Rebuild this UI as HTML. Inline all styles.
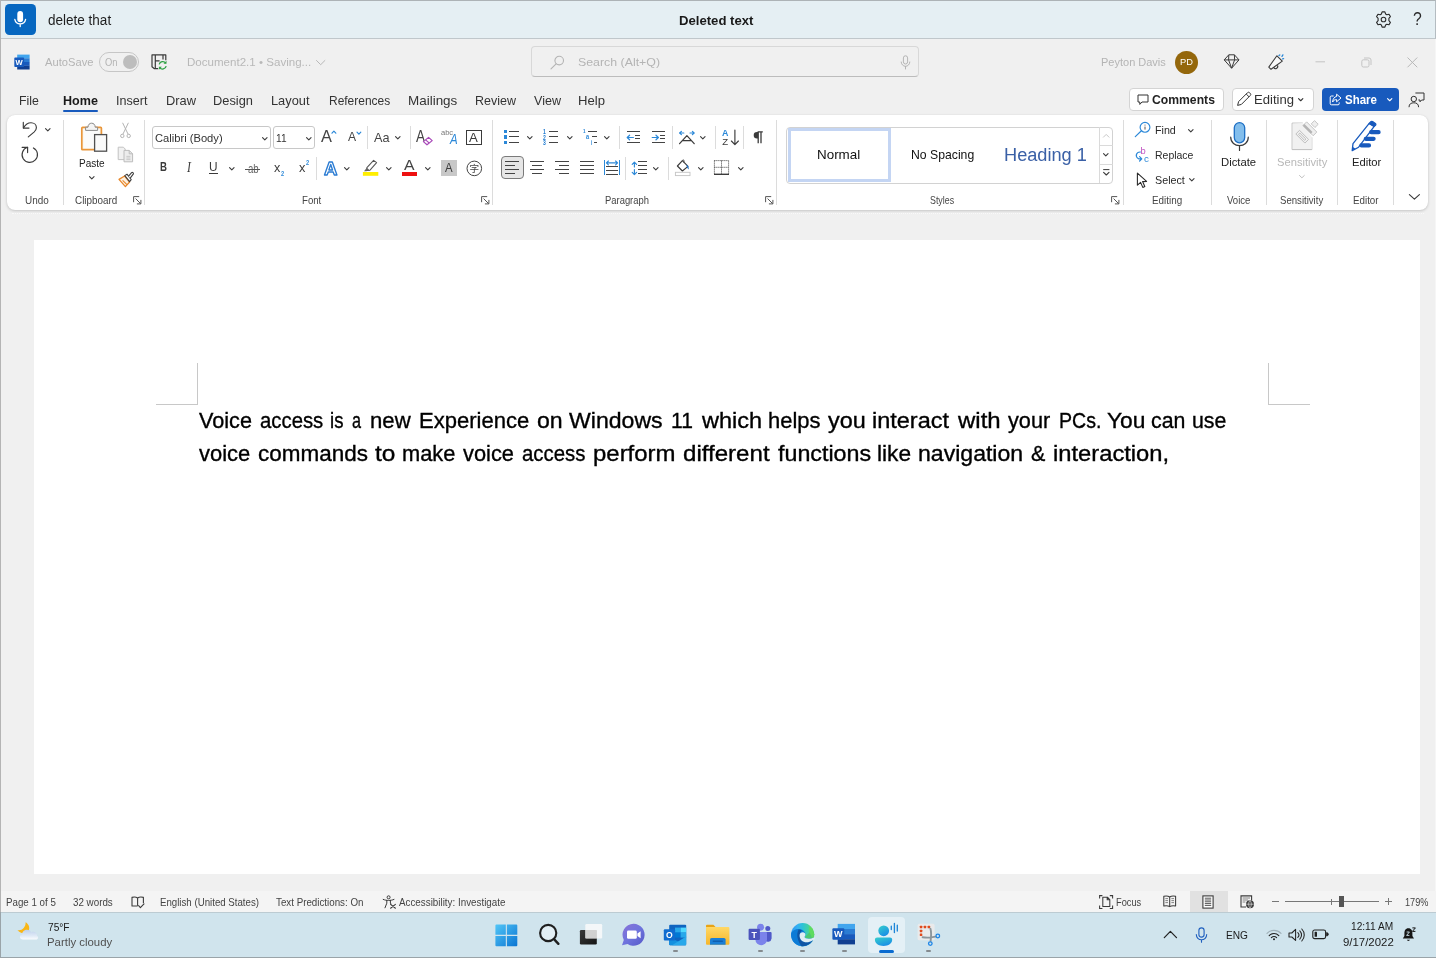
<!DOCTYPE html>
<html lang="en"><head><meta charset="utf-8"><title>Document2.1 - Word</title>
<style>
html,body{margin:0;padding:0;}
body{width:1436px;height:958px;overflow:hidden;background:#f0f0f0;font-family:"Liberation Sans",sans-serif;}
#root{will-change:transform;position:relative;width:1436px;height:958px;overflow:hidden;background:#f0f0f0;}
.t{position:absolute;white-space:nowrap;display:inline-block;transform-origin:0 50%;}
.i{position:absolute;overflow:visible;}
.b{position:absolute;box-sizing:border-box;}

</style></head>
<body>
<div id="root">
<div class="b" style="left:0px;top:0px;width:1436px;height:39px;background:#e5eff3;border-top:1px solid #adb3b6;border-bottom:1px solid #c0c7cb;border-right:1px solid #b4bcc1;box-sizing:border-box;"></div>
<div class="b" style="left:5px;top:4px;width:30.5px;height:30.6px;background:#0667c0;border-radius:4.5px;"></div>
<span id="t0" class="t " style="left:48.00px;top:12.4px;font-size:13.8px;line-height:18px;color:#1f1f1f;font-weight:400;transform:scaleX(0.9798);">delete that</span>
<span id="t1" class="t " style="left:678.50px;top:11.9px;font-size:13.6px;line-height:18px;color:#1a1a1a;font-weight:700;transform:scaleX(0.9661);">Deleted text</span>
<div class="b" style="left:0px;top:0px;width:1px;height:958px;background:#b4b4b4;"></div>
<div class="b" style="left:1435px;top:39px;width:1px;height:873px;background:#f6f6f6;"></div>
<span id="t2" class="t " style="left:45.00px;top:54.4px;font-size:11.6px;line-height:15px;color:#b4b4b4;font-weight:400;transform:scaleX(0.9633);">AutoSave</span>
<div class="b" style="left:99px;top:52px;width:40px;height:20px;border:1px solid #c6c6c6;border-radius:10px;"></div>
<span id="t3" class="t " style="left:105.20px;top:55.2px;font-size:10.6px;line-height:14px;color:#b4b4b4;font-weight:400;transform:scaleX(0.8848);">On</span>
<div class="b" style="left:123px;top:55px;width:14px;height:14px;background:#bdbdbd;border-radius:7px;"></div>
<span id="t4" class="t " style="left:187.00px;top:54.4px;font-size:11.6px;line-height:15px;color:#b8b8b8;font-weight:400;transform:scaleX(0.9972);">Document2.1 • Saving...</span>
<div class="b" style="left:531px;top:46px;width:388px;height:31px;background:#f0f0f0;border:1px solid #d8d8d8;border-bottom-color:#bcbcbc;border-radius:4px;"></div>
<span id="t5" class="t " style="left:577.60px;top:54.3px;font-size:11.6px;line-height:15px;color:#b4b4b4;font-weight:400;transform:scaleX(1.0657);">Search (Alt+Q)</span>
<span id="t6" class="t " style="left:1100.50px;top:54.4px;font-size:11.6px;line-height:15px;color:#b4b4b4;font-weight:400;transform:scaleX(0.9488);">Peyton Davis</span>
<div class="b" style="left:1175px;top:50.5px;width:23px;height:23px;background:#94670c;border-radius:12px;"></div>
<span id="t7" class="t " style="left:1180.00px;top:56.3px;font-size:9.6px;line-height:12px;color:#ffffff;font-weight:400;transform:scaleX(0.9702);">PD</span>
<span id="t8" class="t " style="left:18.50px;top:92.9px;font-size:12.4px;line-height:16px;color:#333333;font-weight:400;transform:scaleX(0.9961);">File</span>
<span id="t9" class="t " style="left:63.00px;top:92.9px;font-size:12.4px;line-height:16px;color:#1a1a1a;font-weight:700;transform:scaleX(1.0135);">Home</span>
<span id="t10" class="t " style="left:115.99px;top:92.9px;font-size:12.4px;line-height:16px;color:#333333;font-weight:400;transform:scaleX(1.0149);">Insert</span>
<span id="t11" class="t " style="left:165.96px;top:92.9px;font-size:12.4px;line-height:16px;color:#333333;font-weight:400;transform:scaleX(1.0370);">Draw</span>
<span id="t12" class="t " style="left:213.46px;top:92.9px;font-size:12.4px;line-height:16px;color:#333333;font-weight:400;transform:scaleX(1.0351);">Design</span>
<span id="t13" class="t " style="left:270.97px;top:92.9px;font-size:12.4px;line-height:16px;color:#333333;font-weight:400;transform:scaleX(1.0337);">Layout</span>
<span id="t14" class="t " style="left:329.03px;top:92.9px;font-size:12.4px;line-height:16px;color:#333333;font-weight:400;transform:scaleX(0.9651);">References</span>
<span id="t15" class="t " style="left:408.42px;top:92.9px;font-size:12.4px;line-height:16px;color:#333333;font-weight:400;transform:scaleX(1.0847);">Mailings</span>
<span id="t16" class="t " style="left:474.99px;top:92.9px;font-size:12.4px;line-height:16px;color:#333333;font-weight:400;transform:scaleX(1.0081);">Review</span>
<span id="t17" class="t " style="left:534.00px;top:92.9px;font-size:12.4px;line-height:16px;color:#333333;font-weight:400;transform:scaleX(1.0118);">View</span>
<span id="t18" class="t " style="left:577.94px;top:92.9px;font-size:12.4px;line-height:16px;color:#333333;font-weight:400;transform:scaleX(1.0573);">Help</span>
<div class="b" style="left:63px;top:109.5px;width:35px;height:2px;background:#185abd;border-radius:1px;"></div>
<div class="b" style="left:1129px;top:88px;width:95px;height:22.5px;background:#fff;border:1px solid #d4d4d4;border-radius:4px;"></div>
<span id="t19" class="t " style="left:1152.00px;top:91.6px;font-size:12.4px;line-height:16px;color:#222;font-weight:700;transform:scaleX(0.9823);">Comments</span>
<div class="b" style="left:1232px;top:88px;width:82px;height:22.5px;background:#fff;border:1px solid #d4d4d4;border-radius:4px;"></div>
<span id="t20" class="t " style="left:1253.95px;top:91.6px;font-size:12.4px;line-height:16px;color:#333;font-weight:400;transform:scaleX(1.0542);">Editing</span>
<div class="b" style="left:1321.5px;top:88px;width:77.3px;height:22.5px;background:#185abd;border-radius:4px;"></div>
<span id="t21" class="t " style="left:1345.00px;top:91.6px;font-size:12.4px;line-height:16px;color:#fff;font-weight:700;transform:scaleX(0.9263);">Share</span>
<div class="b" style="left:6.7px;top:114.6px;width:1421.5px;height:95.3px;background:#fff;border-radius:8px;box-shadow:0 1px 3px rgba(0,0,0,.18),0 0 1px rgba(0,0,0,.08);"></div>
<div class="b" style="left:63.0px;top:119.5px;width:1px;height:85px;background:#dcdcdc;"></div>
<div class="b" style="left:143.5px;top:119.5px;width:1px;height:85px;background:#dcdcdc;"></div>
<div class="b" style="left:492.0px;top:119.5px;width:1px;height:85px;background:#dcdcdc;"></div>
<div class="b" style="left:776.0px;top:119.5px;width:1px;height:85px;background:#dcdcdc;"></div>
<div class="b" style="left:1122.5px;top:119.5px;width:1px;height:85px;background:#dcdcdc;"></div>
<div class="b" style="left:1210.5px;top:119.5px;width:1px;height:85px;background:#dcdcdc;"></div>
<div class="b" style="left:1266.3px;top:119.5px;width:1px;height:85px;background:#dcdcdc;"></div>
<div class="b" style="left:1337.2px;top:119.5px;width:1px;height:85px;background:#dcdcdc;"></div>
<div class="b" style="left:1392.9px;top:119.5px;width:1px;height:85px;background:#dcdcdc;"></div>
<div class="b" style="left:366.8px;top:126px;width:1px;height:22.5px;background:#dcdcdc;"></div>
<div class="b" style="left:409.5px;top:126px;width:1px;height:22.5px;background:#dcdcdc;"></div>
<div class="b" style="left:619.0px;top:126px;width:1px;height:22.5px;background:#dcdcdc;"></div>
<div class="b" style="left:671.9px;top:126px;width:1px;height:22.5px;background:#dcdcdc;"></div>
<div class="b" style="left:715.1px;top:126px;width:1px;height:22.5px;background:#dcdcdc;"></div>
<div class="b" style="left:743.3px;top:126px;width:1px;height:22.5px;background:#dcdcdc;"></div>
<div class="b" style="left:315.9px;top:157px;width:1px;height:22.5px;background:#dcdcdc;"></div>
<div class="b" style="left:624.9px;top:157px;width:1px;height:22.5px;background:#dcdcdc;"></div>
<div class="b" style="left:668.1px;top:157px;width:1px;height:22.5px;background:#dcdcdc;"></div>
<span id="t22" class="t " style="left:25.00px;top:193.7px;font-size:10.3px;line-height:13px;color:#454545;font-weight:400;transform:scaleX(0.9643);">Undo</span>
<span id="t23" class="t " style="left:75.00px;top:193.7px;font-size:10.3px;line-height:13px;color:#454545;font-weight:400;transform:scaleX(0.9584);">Clipboard</span>
<span id="t24" class="t " style="left:301.60px;top:193.7px;font-size:10.3px;line-height:13px;color:#454545;font-weight:400;transform:scaleX(0.9353);">Font</span>
<span id="t25" class="t " style="left:604.50px;top:193.7px;font-size:10.3px;line-height:13px;color:#454545;font-weight:400;transform:scaleX(0.9140);">Paragraph</span>
<span id="t26" class="t " style="left:930.00px;top:193.7px;font-size:10.3px;line-height:13px;color:#454545;font-weight:400;transform:scaleX(0.8605);">Styles</span>
<span id="t27" class="t " style="left:1152.00px;top:193.7px;font-size:10.3px;line-height:13px;color:#454545;font-weight:400;transform:scaleX(0.9573);">Editing</span>
<span id="t28" class="t " style="left:1226.70px;top:193.7px;font-size:10.3px;line-height:13px;color:#454545;font-weight:400;transform:scaleX(0.9308);">Voice</span>
<span id="t29" class="t " style="left:1280.40px;top:193.7px;font-size:10.3px;line-height:13px;color:#454545;font-weight:400;transform:scaleX(0.9322);">Sensitivity</span>
<span id="t30" class="t " style="left:1352.90px;top:193.7px;font-size:10.3px;line-height:13px;color:#454545;font-weight:400;transform:scaleX(0.9501);">Editor</span>
<span id="t31" class="t " style="left:79.00px;top:156.0px;font-size:11.0px;line-height:14px;color:#222;font-weight:400;transform:scaleX(0.9104);">Paste</span>
<div class="b" style="left:152px;top:126px;width:118.5px;height:23px;border:1px solid #c8c8c8;border-radius:3px;background:#fff;"></div>
<span id="t32" class="t " style="left:154.60px;top:129.5px;font-size:11.7px;line-height:15px;color:#333;font-weight:400;transform:scaleX(0.9549);">Calibri (Body)</span>
<div class="b" style="left:273px;top:126px;width:41.5px;height:23px;border:1px solid #c8c8c8;border-radius:3px;background:#fff;"></div>
<span id="t33" class="t " style="left:276.40px;top:129.5px;font-size:11.7px;line-height:15px;color:#333;font-weight:400;transform:scaleX(0.8683);">11</span>
<div class="b" style="left:785.5px;top:126.5px;width:327.5px;height:57px;border:1px solid #d2d2d2;border-radius:4px;background:#fff;"></div>
<div class="b" style="left:787.5px;top:128px;width:103.5px;height:53.5px;border:3px solid #c4d5f3;background:#fff;"></div>
<div class="b" style="left:1098.5px;top:127px;width:1px;height:56px;background:#dadada;"></div>
<div class="b" style="left:1098.5px;top:145px;width:14px;height:1px;background:#dadada;"></div>
<div class="b" style="left:1098.5px;top:164px;width:14px;height:1px;background:#dadada;"></div>
<span id="t34" class="t " style="left:817.30px;top:147.0px;font-size:12.2px;line-height:16px;color:#111;font-weight:400;transform:scaleX(1.0993);">Normal</span>
<span id="t35" class="t " style="left:910.60px;top:147.0px;font-size:12.2px;line-height:16px;color:#111;font-weight:400;transform:scaleX(1.0028);">No Spacing</span>
<span id="t36" class="t " style="left:1004.05px;top:142.0px;font-size:19.2px;line-height:25px;color:#3a60a6;font-weight:400;transform:scaleX(0.9475);">Heading 1</span>
<span id="t37" class="t " style="left:1154.70px;top:123.0px;font-size:11.0px;line-height:14px;color:#2a2a2a;font-weight:400;transform:scaleX(0.9727);">Find</span>
<span id="t38" class="t " style="left:1154.70px;top:148.4px;font-size:11.0px;line-height:14px;color:#2a2a2a;font-weight:400;transform:scaleX(0.9518);">Replace</span>
<span id="t39" class="t " style="left:1154.70px;top:172.9px;font-size:11.0px;line-height:14px;color:#2a2a2a;font-weight:400;transform:scaleX(0.9765);">Select</span>
<span id="t40" class="t " style="left:1221.40px;top:155.4px;font-size:11.0px;line-height:14px;color:#222;font-weight:400;transform:scaleX(1.0259);">Dictate</span>
<span id="t41" class="t " style="left:1276.90px;top:155.4px;font-size:11.0px;line-height:14px;color:#b8b8b8;font-weight:400;transform:scaleX(1.0157);">Sensitivity</span>
<span id="t42" class="t " style="left:1351.50px;top:155.4px;font-size:11.0px;line-height:14px;color:#222;font-weight:400;transform:scaleX(1.0216);">Editor</span>
<div class="b" style="left:12px;top:213px;width:1412px;height:1px;border-top:1px dotted #f9f9f9;"></div>
<div class="b" style="left:34px;top:240px;width:1385.5px;height:634px;background:#fff;"></div>
<div class="b" style="left:197px;top:363px;width:1px;height:41.5px;background:#c8c8c8;"></div>
<div class="b" style="left:156px;top:404px;width:42px;height:1px;background:#c8c8c8;"></div>
<div class="b" style="left:1268px;top:363px;width:1px;height:41.5px;background:#c8c8c8;"></div>
<div class="b" style="left:1268px;top:404px;width:42px;height:1px;background:#c8c8c8;"></div>
<span id="t43" class="t " style="left:198.80px;top:405.7px;font-size:22.2px;line-height:29px;color:#000;font-weight:400;-webkit-text-stroke:0.35px #000;transform:scaleX(0.9752);">Voice</span>
<span id="t44" class="t " style="left:259.70px;top:405.7px;font-size:22.2px;line-height:29px;color:#000;font-weight:400;-webkit-text-stroke:0.35px #000;transform:scaleX(0.9165);">access</span>
<span id="t45" class="t " style="left:330.06px;top:405.7px;font-size:22.2px;line-height:29px;color:#000;font-weight:400;-webkit-text-stroke:0.35px #000;transform:scaleX(0.8373);">is</span>
<span id="t46" class="t " style="left:352.20px;top:405.7px;font-size:22.2px;line-height:29px;color:#000;font-weight:400;-webkit-text-stroke:0.35px #000;transform:scaleX(0.7308);">a</span>
<span id="t47" class="t " style="left:369.50px;top:405.7px;font-size:22.2px;line-height:29px;color:#000;font-weight:400;-webkit-text-stroke:0.35px #000;transform:scaleX(0.9981);">new</span>
<span id="t48" class="t " style="left:419.11px;top:405.7px;font-size:22.2px;line-height:29px;color:#000;font-weight:400;-webkit-text-stroke:0.35px #000;transform:scaleX(0.9930);">Experience</span>
<span id="t49" class="t " style="left:537.10px;top:405.7px;font-size:22.2px;line-height:29px;color:#000;font-weight:400;-webkit-text-stroke:0.35px #000;transform:scaleX(1.0411);">on</span>
<span id="t50" class="t " style="left:569.40px;top:405.7px;font-size:22.2px;line-height:29px;color:#000;font-weight:400;-webkit-text-stroke:0.35px #000;transform:scaleX(1.0399);">Windows</span>
<span id="t51" class="t " style="left:671.45px;top:405.7px;font-size:22.2px;line-height:29px;color:#000;font-weight:400;-webkit-text-stroke:0.35px #000;transform:scaleX(0.9497);">11</span>
<span id="t52" class="t " style="left:702.06px;top:405.7px;font-size:22.2px;line-height:29px;color:#000;font-weight:400;-webkit-text-stroke:0.35px #000;transform:scaleX(1.0588);">which</span>
<span id="t53" class="t " style="left:768.41px;top:405.7px;font-size:22.2px;line-height:29px;color:#000;font-weight:400;-webkit-text-stroke:0.35px #000;transform:scaleX(0.9894);">helps</span>
<span id="t54" class="t " style="left:828.40px;top:405.7px;font-size:22.2px;line-height:29px;color:#000;font-weight:400;-webkit-text-stroke:0.35px #000;transform:scaleX(1.0542);">you</span>
<span id="t55" class="t " style="left:871.74px;top:405.7px;font-size:22.2px;line-height:29px;color:#000;font-weight:400;-webkit-text-stroke:0.35px #000;transform:scaleX(1.0587);">interact</span>
<span id="t56" class="t " style="left:957.68px;top:405.7px;font-size:22.2px;line-height:29px;color:#000;font-weight:400;-webkit-text-stroke:0.35px #000;transform:scaleX(1.0814);">with</span>
<span id="t57" class="t " style="left:1007.70px;top:405.7px;font-size:22.2px;line-height:29px;color:#000;font-weight:400;-webkit-text-stroke:0.35px #000;transform:scaleX(0.9778);">your</span>
<span id="t58" class="t " style="left:1058.92px;top:405.7px;font-size:22.2px;line-height:29px;color:#000;font-weight:400;-webkit-text-stroke:0.35px #000;transform:scaleX(0.8821);">PCs.</span>
<span id="t59" class="t " style="left:1107.40px;top:405.7px;font-size:22.2px;line-height:29px;color:#000;font-weight:400;-webkit-text-stroke:0.35px #000;transform:scaleX(1.0277);">You</span>
<span id="t60" class="t " style="left:1151.10px;top:405.7px;font-size:22.2px;line-height:29px;color:#000;font-weight:400;-webkit-text-stroke:0.35px #000;transform:scaleX(0.9613);">can</span>
<span id="t61" class="t " style="left:1191.94px;top:405.7px;font-size:22.2px;line-height:29px;color:#000;font-weight:400;-webkit-text-stroke:0.35px #000;transform:scaleX(0.9613);">use</span>
<span id="t62" class="t " style="left:198.80px;top:439.1px;font-size:22.2px;line-height:29px;color:#000;font-weight:400;-webkit-text-stroke:0.35px #000;transform:scaleX(0.9892);">voice</span>
<span id="t63" class="t " style="left:257.70px;top:439.1px;font-size:22.2px;line-height:29px;color:#000;font-weight:400;-webkit-text-stroke:0.35px #000;transform:scaleX(1.0128);">commands</span>
<span id="t64" class="t " style="left:375.00px;top:439.1px;font-size:22.2px;line-height:29px;color:#000;font-weight:400;-webkit-text-stroke:0.35px #000;transform:scaleX(1.1011);">to</span>
<span id="t65" class="t " style="left:402.12px;top:439.1px;font-size:22.2px;line-height:29px;color:#000;font-weight:400;-webkit-text-stroke:0.35px #000;transform:scaleX(0.9846);">make</span>
<span id="t66" class="t " style="left:463.30px;top:439.1px;font-size:22.2px;line-height:29px;color:#000;font-weight:400;-webkit-text-stroke:0.35px #000;transform:scaleX(0.9834);">voice</span>
<span id="t67" class="t " style="left:522.30px;top:439.1px;font-size:22.2px;line-height:29px;color:#000;font-weight:400;-webkit-text-stroke:0.35px #000;transform:scaleX(0.9194);">access</span>
<span id="t68" class="t " style="left:593.42px;top:439.1px;font-size:22.2px;line-height:29px;color:#000;font-weight:400;-webkit-text-stroke:0.35px #000;transform:scaleX(1.0792);">perform</span>
<span id="t69" class="t " style="left:683.00px;top:439.1px;font-size:22.2px;line-height:29px;color:#000;font-weight:400;-webkit-text-stroke:0.35px #000;transform:scaleX(1.0854);">different</span>
<span id="t70" class="t " style="left:777.50px;top:439.1px;font-size:22.2px;line-height:29px;color:#000;font-weight:400;-webkit-text-stroke:0.35px #000;transform:scaleX(1.0484);">functions</span>
<span id="t71" class="t " style="left:876.58px;top:439.1px;font-size:22.2px;line-height:29px;color:#000;font-weight:400;-webkit-text-stroke:0.35px #000;transform:scaleX(1.0234);">like</span>
<span id="t72" class="t " style="left:917.66px;top:439.1px;font-size:22.2px;line-height:29px;color:#000;font-weight:400;-webkit-text-stroke:0.35px #000;transform:scaleX(1.0393);">navigation</span>
<span id="t73" class="t " style="left:1030.70px;top:439.1px;font-size:22.2px;line-height:29px;color:#000;font-weight:400;-webkit-text-stroke:0.35px #000;transform:scaleX(0.9667);">&amp;</span>
<span id="t74" class="t " style="left:1053.43px;top:439.1px;font-size:22.2px;line-height:29px;color:#000;font-weight:400;-webkit-text-stroke:0.35px #000;transform:scaleX(1.0699);">interaction,</span>
<div class="b" style="left:1px;top:890.5px;width:1435px;height:21.5px;background:#f4f4f4;"></div>
<span id="t75" class="t " style="left:6.30px;top:896.2px;font-size:10.3px;line-height:13px;color:#444;font-weight:400;transform:scaleX(0.9463);">Page 1 of 5</span>
<span id="t76" class="t " style="left:73.20px;top:896.2px;font-size:10.3px;line-height:13px;color:#444;font-weight:400;transform:scaleX(0.9512);">32 words</span>
<span id="t77" class="t " style="left:160.40px;top:896.2px;font-size:10.3px;line-height:13px;color:#444;font-weight:400;transform:scaleX(0.9401);">English (United States)</span>
<span id="t78" class="t " style="left:276.30px;top:896.2px;font-size:10.3px;line-height:13px;color:#444;font-weight:400;transform:scaleX(0.9490);">Text Predictions: On</span>
<span id="t79" class="t " style="left:399.00px;top:896.2px;font-size:10.3px;line-height:13px;color:#444;font-weight:400;transform:scaleX(0.9538);">Accessibility: Investigate</span>
<span id="t80" class="t " style="left:1115.60px;top:896.2px;font-size:10.3px;line-height:13px;color:#444;font-weight:400;transform:scaleX(0.8999);">Focus</span>
<div class="b" style="left:1189.5px;top:891px;width:38px;height:20.5px;background:#e1e1e1;"></div>
<span id="t81" class="t " style="left:1404.90px;top:896.2px;font-size:10.3px;line-height:13px;color:#444;font-weight:400;transform:scaleX(0.8900);">179%</span>
<div class="b" style="left:0px;top:911.5px;width:1436px;height:46.5px;background:#d0e4ed;border-top:1px solid #bccbd2;border-bottom:1px solid #9aa4a9;"></div>
<div class="b" style="left:0px;top:911.5px;width:1px;height:46.5px;background:#9aa4a9;"></div>
<span id="t82" class="t " style="left:47.90px;top:918.8px;font-size:11.6px;line-height:15px;color:#1a1a1a;font-weight:400;transform:scaleX(0.8764);">75°F</span>
<span id="t83" class="t " style="left:47.20px;top:935.3px;font-size:10.8px;line-height:14px;color:#505050;font-weight:400;transform:scaleX(1.0543);">Partly cloudy</span>
<span id="t84" class="t " style="left:1226.40px;top:928.1px;font-size:11.4px;line-height:15px;color:#1a1a1a;font-weight:400;transform:scaleX(0.8903);">ENG</span>
<span id="t85" class="t " style="left:1351.00px;top:919.1px;font-size:11.2px;line-height:15px;color:#1a1a1a;font-weight:400;transform:scaleX(0.9072);">12:11 AM</span>
<span id="t86" class="t " style="left:1343.30px;top:934.6px;font-size:11.2px;line-height:15px;color:#1a1a1a;font-weight:400;transform:scaleX(1.0192);">9/17/2022</span>
<div class="b" style="left:868px;top:916.5px;width:36.5px;height:36px;background:#e4f0f6;border-radius:4px;"></div>
<div class="b" style="left:672.6px;top:950px;width:5.8px;height:2.4px;background:#858b8f;border-radius:1.2px;"></div>
<div class="b" style="left:757.6px;top:950px;width:5.8px;height:2.4px;background:#858b8f;border-radius:1.2px;"></div>
<div class="b" style="left:799.6px;top:950px;width:5.8px;height:2.4px;background:#858b8f;border-radius:1.2px;"></div>
<div class="b" style="left:841.6px;top:950px;width:5.8px;height:2.4px;background:#858b8f;border-radius:1.2px;"></div>
<div class="b" style="left:925.6px;top:950px;width:5.8px;height:2.4px;background:#858b8f;border-radius:1.2px;"></div>
<div class="b" style="left:879px;top:949.9px;width:14.6px;height:2.9px;background:#0a6bd0;border-radius:1.5px;"></div>
<svg class="i" style="left:5px;top:4px;" width="30" height="30" viewBox="0 0 30 30"><rect x="12.3" y="7" width="5.8" height="11.2" rx="2.9" fill="#fff"/><path d="M9.8 15.4 A5.5 5.5 0 0 0 20.6 15.4" stroke="#fff" stroke-width="1.3" fill="none" stroke-linecap="round"/><path d="M15.2 20.6 V22.6" stroke="#fff" stroke-width="1.3" stroke-linecap="round"/></svg>
<svg class="i" style="left:1375px;top:10.5px;" width="17" height="17" viewBox="0 0 17 17"><g transform="translate(8.5 8.5)" fill="none" stroke="#2a2a2a" stroke-width="1.1" stroke-linejoin="round"><path d="M-1.4 -7.6 L1.4 -7.6 L2.1 -5.5 L3.3 -4.8 L5.5 -5.3 L6.9 -2.9 L5.4 -1.2 L5.4 1.2 L6.9 2.9 L5.5 5.3 L3.3 4.8 L2.1 5.5 L1.4 7.6 L-1.4 7.6 L-2.1 5.5 L-3.3 4.8 L-5.5 5.3 L-6.9 2.9 L-5.4 1.2 L-5.4 -1.2 L-6.9 -2.9 L-5.5 -5.3 L-3.3 -4.8 L-2.1 -5.5 Z"/><circle r="2.3"/></g></svg>
<span id="t87" class="t " style="left:1412.60px;top:7.8px;font-size:17.5px;line-height:23px;color:#2a2a2a;font-weight:400;transform:scaleX(0.9000);">?</span>
<svg class="i" style="left:14px;top:53.5px;" width="16" height="16" viewBox="0 0 16 16"><rect x="3.2" y="0.6" width="12.4" height="3.8" fill="#41a5ee"/><rect x="3.2" y="4.3" width="12.4" height="3.8" fill="#2b7cd3"/><rect x="3.2" y="8.0" width="12.4" height="3.8" fill="#185abd"/><rect x="3.2" y="11.7" width="12.4" height="3.8" fill="#103f91"/><rect x="0.3" y="3.6" width="9.8" height="9.4" rx="0.8" fill="#185abd"/><text x="5.2" y="11.2" font-family="Liberation Sans, sans-serif" font-weight="700" font-size="7.6" fill="#fff" text-anchor="middle">W</text></svg>
<svg class="i" style="left:151px;top:54px;" width="17" height="17" viewBox="0 0 17 17"><path d="M14.8 6.2 V0.9 H1 V12.7 L3.4 14.7 H7.2" fill="none" stroke="#3b3b3b" stroke-width="1.2" stroke-linejoin="round"/><path d="M4.3 14.7 V6.8 H8.6 M4.3 0.9 V6.8 M12 0.9 V5.6" fill="none" stroke="#3b3b3b" stroke-width="1.2"/><path d="M8.2 10.4 A3.7 3.7 0 0 1 14.7 9 M15.2 12.2 A3.7 3.7 0 0 1 8.7 13.6" fill="none" stroke="#2ea043" stroke-width="1.3"/><path d="M15.5 6.8 V9.8 H12.5 Z M7.9 15.8 V12.8 H10.9 Z" fill="#2ea043"/></svg>
<svg class="i" style="left:314.80px;top:58.70px" width="11.4" height="7.2"><path d="M1.50 1.50 L5.70 5.70 L9.90 1.50" stroke="#b8b8b8" stroke-width="1" fill="none" stroke-linecap="round" stroke-linejoin="round"/></svg>
<svg class="i" style="left:550px;top:54.5px;" width="15" height="15" viewBox="0 0 15 15"><circle cx="9.2" cy="5.6" r="4.3" fill="none" stroke="#b4b4b4" stroke-width="1.1"/><path d="M6.1 8.8 L1 13.9" stroke="#b4b4b4" stroke-width="1.1" stroke-linecap="round"/></svg>
<svg class="i" style="left:900px;top:55px;" width="11" height="15" viewBox="0 0 11 15"><rect x="3.4" y="0.8" width="4.2" height="8.2" rx="2.1" fill="none" stroke="#b4b4b4" stroke-width="1"/><path d="M1.2 7 A4.3 4.3 0 0 0 9.8 7 M5.5 11.4 V14" fill="none" stroke="#b4b4b4" stroke-width="1" stroke-linecap="round"/></svg>
<svg class="i" style="left:1223px;top:54.2px;" width="17" height="15" viewBox="0 0 17 15"><path d="M5.8 0.8 H11.4 L16 5.9 L8.6 14.2 L1.2 5.9 Z M1.2 5.9 H16 M5.8 0.8 L5.6 5.9 L8.6 14.2 L11.6 5.9 L11.4 0.8" fill="none" stroke="#3a3a3a" stroke-width="1" stroke-linejoin="round"/></svg>
<svg class="i" style="left:1266.5px;top:53.5px;" width="18" height="17" viewBox="0 0 18 17"><path d="M1.8 13.1 L9.9 1.8 L15.3 7.1 L4 15.3 Z" fill="#fafafa" stroke="#3a3a3a" stroke-width="1.1" stroke-linejoin="round"/><path d="M6.8 13.6 A2 2 0 0 0 10.4 11.4" fill="none" stroke="#3a3a3a" stroke-width="1.1"/><path d="M12 1.6 L12.8 0.9 M15 2.4 L15.9 0.9 M15.6 4.9 L16.6 4.7" stroke="#2b88d8" stroke-width="1.3" stroke-linecap="round"/></svg>
<svg class="i" style="left:1315px;top:57px;" width="11" height="10" viewBox="0 0 11 10"><path d="M0.5 4.8 H10" stroke="#c4c4c4" stroke-width="1"/></svg>
<svg class="i" style="left:1360.5px;top:56.5px;" width="11" height="11" viewBox="0 0 11 11"><rect x="0.8" y="2.8" width="7.2" height="7.2" rx="1.6" fill="none" stroke="#c4c4c4" stroke-width="1"/><path d="M3 1 H8 A2 2 0 0 1 10 3 V8" fill="none" stroke="#c4c4c4" stroke-width="1"/></svg>
<svg class="i" style="left:1406.5px;top:56.5px;" width="11" height="11" viewBox="0 0 11 11"><path d="M0.8 0.8 L10 10 M10 0.8 L0.8 10" stroke="#b8b8b8" stroke-width="1" stroke-linecap="round"/></svg>
<svg class="i" style="left:1136.5px;top:93.5px;" width="12" height="12" viewBox="0 0 12 12"><path d="M1 1 H11 V8 H5 L2.8 10.4 V8 H1 Z" fill="none" stroke="#333" stroke-width="1" stroke-linejoin="round"/></svg>
<svg class="i" style="left:1236px;top:91px;" width="16" height="16" viewBox="0 0 16 16"><path d="M1.6 14.4 L2.6 10.6 L11.4 1.8 A1.6 1.6 0 0 1 13.7 1.8 L14.2 2.3 A1.6 1.6 0 0 1 14.2 4.6 L5.4 13.4 Z M10.2 3 L13 5.8" fill="none" stroke="#333" stroke-width="1" stroke-linejoin="round"/></svg>
<svg class="i" style="left:1297.30px;top:96.95px" width="7.4" height="5.3"><path d="M1.55 1.55 L3.70 3.75 L5.85 1.55" stroke="#333" stroke-width="1.1" fill="none" stroke-linecap="round" stroke-linejoin="round"/></svg>
<svg class="i" style="left:1329px;top:93px;" width="13" height="13" viewBox="0 0 13 13"><path d="M4.6 3 H2.4 A1.2 1.2 0 0 0 1.2 4.2 V10.6 A1.2 1.2 0 0 0 2.4 11.8 H9 A1.2 1.2 0 0 0 10.2 10.6 V9.4" fill="none" stroke="#fff" stroke-width="1"/><path d="M7.6 1.2 L12 5 L7.6 8.8 V6.6 C5.6 6.6 4.4 7.4 3.6 9 C3.8 5.8 5.4 3.8 7.6 3.5 Z" fill="none" stroke="#fff" stroke-width="1" stroke-linejoin="round"/></svg>
<svg class="i" style="left:1385.80px;top:97.15px" width="7.4" height="5.3"><path d="M1.55 1.55 L3.70 3.75 L5.85 1.55" stroke="#fff" stroke-width="1.1" fill="none" stroke-linecap="round" stroke-linejoin="round"/></svg>
<svg class="i" style="left:1407.5px;top:91.5px;" width="17" height="16" viewBox="0 0 17 16"><path d="M7.4 1 H16 V8 H13.6 L12 9.8 V8 H10.4" fill="none" stroke="#333" stroke-width="1" stroke-linejoin="round"/><circle cx="5.8" cy="7" r="2.7" fill="#f0f0f0" stroke="#333" stroke-width="1"/><path d="M1 15.2 C1 11.8 3.2 10.8 5.8 10.8 C8.4 10.8 10.6 11.8 10.6 15.2" fill="none" stroke="#333" stroke-width="1"/></svg>
<svg class="i" style="left:132.6px;top:196.2px;" width="9" height="9" viewBox="0 0 9 9"><path d="M0.6 6.2 V0.6 H6.2" fill="none" stroke="#555" stroke-width="1"/><path d="M2.6 2.6 L7.6 7.6 M7.9 3.9 V7.9 H3.9" fill="none" stroke="#555" stroke-width="1"/></svg>
<svg class="i" style="left:481.2px;top:196.2px;" width="9" height="9" viewBox="0 0 9 9"><path d="M0.6 6.2 V0.6 H6.2" fill="none" stroke="#555" stroke-width="1"/><path d="M2.6 2.6 L7.6 7.6 M7.9 3.9 V7.9 H3.9" fill="none" stroke="#555" stroke-width="1"/></svg>
<svg class="i" style="left:765px;top:196.2px;" width="9" height="9" viewBox="0 0 9 9"><path d="M0.6 6.2 V0.6 H6.2" fill="none" stroke="#555" stroke-width="1"/><path d="M2.6 2.6 L7.6 7.6 M7.9 3.9 V7.9 H3.9" fill="none" stroke="#555" stroke-width="1"/></svg>
<svg class="i" style="left:1111.4px;top:196.2px;" width="9" height="9" viewBox="0 0 9 9"><path d="M0.6 6.2 V0.6 H6.2" fill="none" stroke="#555" stroke-width="1"/><path d="M2.6 2.6 L7.6 7.6 M7.9 3.9 V7.9 H3.9" fill="none" stroke="#555" stroke-width="1"/></svg>
<svg class="i" style="left:20px;top:120px;" width="20" height="20" viewBox="0 0 20 20"><path d="M3.3 2.4 V8.1 H9" fill="none" stroke="#3b3b3b" stroke-width="1.15" stroke-linejoin="round" stroke-linecap="round"/><path d="M3.5 7.9 C5.4 4.6 8 2.7 11 2.7 C14.2 2.7 16.4 5 16.4 7.7 C16.4 9.7 15.4 10.8 14 12.1 L8.3 16.9" fill="none" stroke="#3b3b3b" stroke-width="1.15" stroke-linecap="round"/></svg>
<svg class="i" style="left:43.90px;top:127.20px" width="7.6" height="5.4"><path d="M1.55 1.55 L3.80 3.85 L6.05 1.55" stroke="#3b3b3b" stroke-width="1.1" fill="none" stroke-linecap="round" stroke-linejoin="round"/></svg>
<svg class="i" style="left:20px;top:145px;" width="20" height="20" viewBox="0 0 20 20"><path d="M13.4 2.9 A7.7 7.7 0 1 1 7.6 2.3" fill="none" stroke="#3b3b3b" stroke-width="1.15" stroke-linecap="round"/><path d="M2.1 2.3 H7.6 V7.6" fill="none" stroke="#3b3b3b" stroke-width="1.15" stroke-linecap="round" stroke-linejoin="round"/></svg>
<svg class="i" style="left:80px;top:122px;" width="28" height="31" viewBox="0 0 28 31"><rect x="1.8" y="5.4" width="19.6" height="22.3" rx="0.8" fill="#fef6e8" stroke="#e9963a" stroke-width="1.7"/><rect x="3.6" y="7.6" width="16" height="18.6" fill="#fbfbfb"/><path d="M5.6 8.4 V5.2 H8 C8 2.6 9.6 1.2 11.6 1.2 C13.6 1.2 15.2 2.6 15.2 5.2 H17.6 V8.4 Z" fill="#f4f4f4" stroke="#8a8a8a" stroke-width="1"/><rect x="14.6" y="12.6" width="12" height="16.6" fill="#fafafa" stroke="#505050" stroke-width="1.3"/></svg>
<svg class="i" style="left:87.60px;top:175.40px" width="7.6" height="5.4"><path d="M1.55 1.55 L3.80 3.85 L6.05 1.55" stroke="#3b3b3b" stroke-width="1.1" fill="none" stroke-linecap="round" stroke-linejoin="round"/></svg>
<svg class="i" style="left:119px;top:121.5px;" width="13" height="17" viewBox="0 0 13 17"><path d="M3.6 0.8 L9.2 12.4 M9.4 0.8 L3.8 12.4" stroke="#b4b4b4" stroke-width="1" fill="none"/><circle cx="3.3" cy="13.9" r="1.7" fill="none" stroke="#b4b4b4" stroke-width="1"/><circle cx="9.7" cy="13.9" r="1.7" fill="none" stroke="#b4b4b4" stroke-width="1"/></svg>
<svg class="i" style="left:117px;top:146px;" width="17" height="17" viewBox="0 0 17 17"><path d="M1.2 1.2 H6.4 L8.2 3 V13.6 H1.2 Z" fill="#f1f1f1" stroke="#c2c2c2" stroke-width="1"/><path d="M7 4.4 H12.2 L15.6 7.8 V15.8 H7 Z" fill="#ececec" stroke="#bcbcbc" stroke-width="1"/><path d="M12.2 4.4 V7.8 H15.6" fill="none" stroke="#bcbcbc" stroke-width="1"/><path d="M9.4 10.4 H13.4 M9.4 12 H13.4 M9.4 13.6 H13.4" stroke="#c6c6c6" stroke-width="0.9"/></svg>
<svg class="i" style="left:117.5px;top:170.5px;" width="17" height="17" viewBox="0 0 17 17"><path d="M1 8.4 L6.6 5 L11.6 11 L7.4 15.6 Z" fill="#fdf0e0" stroke="#e8872a" stroke-width="1.3" stroke-linejoin="round"/><path d="M4.6 9.4 L9 13.6" stroke="#e8872a" stroke-width="1.1"/><path d="M6.8 4.6 L9 3.2 L13.2 8.6 L11.6 10.6 Z" fill="#fff" stroke="#404040" stroke-width="1.1" stroke-linejoin="round"/><path d="M10.6 5.2 L13.6 1.6 A1.2 1.2 0 0 1 15.4 2.9 L12.2 7.2" fill="#fff" stroke="#404040" stroke-width="1.1" stroke-linejoin="round"/></svg>
<svg class="i" style="left:260.60px;top:135.60px" width="7.6" height="5.4"><path d="M1.55 1.55 L3.80 3.85 L6.05 1.55" stroke="#3b3b3b" stroke-width="1.1" fill="none" stroke-linecap="round" stroke-linejoin="round"/></svg>
<svg class="i" style="left:304.70px;top:135.60px" width="7.6" height="5.4"><path d="M1.55 1.55 L3.80 3.85 L6.05 1.55" stroke="#3b3b3b" stroke-width="1.1" fill="none" stroke-linecap="round" stroke-linejoin="round"/></svg>
<span id="t88" class="t " style="left:321.30px;top:125.1px;font-size:17.2px;line-height:22px;color:#444;font-weight:400;transform:scaleX(0.9500);">A</span>
<svg class="i" style="left:331.2px;top:130.2px;" width="7" height="5" viewBox="0 0 7 5"><path d="M1 3.2 L2.9 1.2 L4.8 3.2" fill="none" stroke="#2b88d8" stroke-width="1.2" stroke-linecap="round" stroke-linejoin="round"/></svg>
<span id="t89" class="t " style="left:347.90px;top:128.4px;font-size:13.6px;line-height:18px;color:#444;font-weight:400;transform:scaleX(0.8900);">A</span>
<svg class="i" style="left:355.8px;top:130.6px;" width="7" height="5" viewBox="0 0 7 5"><path d="M1 1.2 L2.9 3.2 L4.8 1.2" fill="none" stroke="#2b88d8" stroke-width="1.2" stroke-linecap="round" stroke-linejoin="round"/></svg>
<span id="t90" class="t " style="left:373.90px;top:129.7px;font-size:12.6px;line-height:16px;color:#444;font-weight:400;transform:scaleX(1.0065);">Aa</span>
<svg class="i" style="left:393.80px;top:135.20px" width="7.6" height="5.4"><path d="M1.55 1.55 L3.80 3.85 L6.05 1.55" stroke="#3b3b3b" stroke-width="1.1" fill="none" stroke-linecap="round" stroke-linejoin="round"/></svg>
<span id="t91" class="t " style="left:416.30px;top:125.1px;font-size:17.2px;line-height:22px;color:#444;font-weight:400;transform:scaleX(0.7917);">A</span>
<svg class="i" style="left:421.5px;top:136px;" width="12" height="10" viewBox="0 0 12 10"><path d="M1.4 5.6 L6.6 1.4 L10.2 4.6 L5 8.8 Z" fill="#fff" stroke="#a848b8" stroke-width="1.2" stroke-linejoin="round"/><path d="M3.6 3.8 L7.2 7" stroke="#a848b8" stroke-width="1.1"/></svg>
<span id="t92" class="t " style="left:440.80px;top:128.4px;font-size:7.8px;line-height:10px;color:#777;font-weight:400;transform:scaleX(0.9627);">abc</span>
<span id="t93" class="t " style="left:450.23px;top:130.9px;font-size:13.8px;line-height:18px;color:#2b88d8;font-weight:400;font-style:italic;transform:scaleX(0.8300);">A</span>
<div class="b" style="left:466px;top:129.8px;width:16px;height:15px;border:1.2px solid #3b3b3b;background:#fff;"></div>
<span id="t94" class="t " style="left:469.20px;top:129.6px;font-size:12.4px;line-height:16px;color:#3b3b3b;font-weight:400;transform:scaleX(1.0667);">A</span>
<span id="t95" class="t " style="left:160.40px;top:159.0px;font-size:12.6px;line-height:16px;color:#3b3b3b;font-weight:700;transform:scaleX(0.7667);">B</span>
<span id="t96" class="t " style="left:186.63px;top:157.8px;font-size:14.2px;line-height:18px;color:#3b3b3b;font-weight:400;font-style:italic;font-family:'Liberation Serif',serif;transform:scaleX(0.8286);">I</span>
<span id="t97" class="t " style="left:209.30px;top:158.8px;font-size:12.0px;line-height:16px;color:#3b3b3b;font-weight:400;transform:scaleX(0.9875);">U</span>
<div class="b" style="left:209px;top:172.8px;width:8.6px;height:1.1px;background:#3b3b3b;"></div>
<svg class="i" style="left:227.80px;top:165.60px" width="7.6" height="5.4"><path d="M1.55 1.55 L3.80 3.85 L6.05 1.55" stroke="#3b3b3b" stroke-width="1.1" fill="none" stroke-linecap="round" stroke-linejoin="round"/></svg>
<span id="t98" class="t " style="left:248.00px;top:159.5px;font-size:12.8px;line-height:17px;color:#666;font-weight:400;transform:scaleX(0.7509);">ab</span>
<div class="b" style="left:245px;top:168.6px;width:15.4px;height:1px;background:#555;"></div>
<span id="t99" class="t " style="left:274.10px;top:158.8px;font-size:13.4px;line-height:17px;color:#3b3b3b;font-weight:400;transform:scaleX(0.9429);">x</span>
<span id="t100" class="t " style="left:281.10px;top:169.9px;font-size:6.4px;line-height:8px;color:#2b88d8;font-weight:700;transform:scaleX(0.8750);">2</span>
<span id="t101" class="t " style="left:299.10px;top:158.8px;font-size:13.4px;line-height:17px;color:#3b3b3b;font-weight:400;transform:scaleX(0.9571);">x</span>
<span id="t102" class="t " style="left:306.10px;top:158.9px;font-size:6.4px;line-height:8px;color:#2b88d8;font-weight:700;transform:scaleX(0.8750);">2</span>
<svg class="i" style="left:322px;top:158.5px;" width="18" height="18" viewBox="0 0 18 18"><text x="8.6" y="15.6" text-anchor="middle" font-family="Liberation Sans, sans-serif" font-weight="700" font-size="18.6" fill="#fff" stroke="#2b7cd3" stroke-width="1.35" stroke-linejoin="round">A</text></svg>
<svg class="i" style="left:342.50px;top:165.60px" width="7.6" height="5.4"><path d="M1.55 1.55 L3.80 3.85 L6.05 1.55" stroke="#3b3b3b" stroke-width="1.1" fill="none" stroke-linecap="round" stroke-linejoin="round"/></svg>
<svg class="i" style="left:362px;top:159px;" width="18" height="18" viewBox="0 0 18 18"><path d="M11.6 1.4 L14.6 3.6 L8 11.2 L4.6 11.6 L4.9 8.6 Z" fill="#fff" stroke="#555" stroke-width="1.05" stroke-linejoin="round"/><path d="M4.8 8.8 L7.8 11.2 L4 12.2 L2 12.2 Z" fill="#666"/><rect x="0.9" y="13" width="15.4" height="3.8" fill="#ffee00"/></svg>
<svg class="i" style="left:384.80px;top:165.60px" width="7.6" height="5.4"><path d="M1.55 1.55 L3.80 3.85 L6.05 1.55" stroke="#3b3b3b" stroke-width="1.1" fill="none" stroke-linecap="round" stroke-linejoin="round"/></svg>
<span id="t103" class="t " style="left:404.30px;top:156.1px;font-size:14.6px;line-height:19px;color:#444;font-weight:400;transform:scaleX(1.0800);">A</span>
<div class="b" style="left:402px;top:172px;width:15.4px;height:3.8px;background:#ee1111;"></div>
<svg class="i" style="left:424.00px;top:165.60px" width="7.6" height="5.4"><path d="M1.55 1.55 L3.80 3.85 L6.05 1.55" stroke="#3b3b3b" stroke-width="1.1" fill="none" stroke-linecap="round" stroke-linejoin="round"/></svg>
<div class="b" style="left:441.2px;top:160.4px;width:15.7px;height:15.2px;background:#c8c8c8;"></div>
<span id="t104" class="t " style="left:444.90px;top:160.4px;font-size:12.2px;line-height:16px;color:#3b3b3b;font-weight:400;transform:scaleX(0.9333);">A</span>
<svg class="i" style="left:465.5px;top:159.5px;" width="17" height="17" viewBox="0 0 17 17"><circle cx="8.3" cy="8.4" r="7.3" fill="none" stroke="#444" stroke-width="1"/><text x="8.3" y="11.9" text-anchor="middle" font-family="Liberation Sans, Noto Sans CJK SC, sans-serif" font-size="9.6" fill="#444">字</text></svg>
<div class="b" style="left:504.1px;top:129.60000000000002px;width:3.4px;height:3.4px;background:#2b88d8;"></div>
<div class="b" style="left:509.2px;top:130.75px;width:9.699999999999989px;height:1.1px;background:#444;"></div>
<div class="b" style="left:504.1px;top:135.20000000000002px;width:3.4px;height:3.4px;background:#2b88d8;"></div>
<div class="b" style="left:509.2px;top:136.35px;width:9.699999999999989px;height:1.1px;background:#444;"></div>
<div class="b" style="left:504.1px;top:140.9px;width:3.4px;height:3.4px;background:#2b88d8;"></div>
<div class="b" style="left:509.2px;top:142.04999999999998px;width:9.699999999999989px;height:1.1px;background:#444;"></div>
<svg class="i" style="left:526.40px;top:134.90px" width="7.6" height="5.4"><path d="M1.55 1.55 L3.80 3.85 L6.05 1.55" stroke="#3b3b3b" stroke-width="1.1" fill="none" stroke-linecap="round" stroke-linejoin="round"/></svg>
<span id="t105" class="t " style="left:543.30px;top:126.9px;font-size:6.6px;line-height:9px;color:#1f7ad0;font-weight:700;transform:scaleX(0.7750);">1</span>
<div class="b" style="left:548.6px;top:130.75px;width:9.399999999999977px;height:1.1px;background:#444;"></div>
<span id="t106" class="t " style="left:543.30px;top:132.5px;font-size:6.6px;line-height:9px;color:#1f7ad0;font-weight:700;transform:scaleX(0.7750);">2</span>
<div class="b" style="left:548.6px;top:136.35px;width:9.399999999999977px;height:1.1px;background:#444;"></div>
<span id="t107" class="t " style="left:543.30px;top:138.2px;font-size:6.6px;line-height:9px;color:#1f7ad0;font-weight:700;transform:scaleX(0.7750);">3</span>
<div class="b" style="left:548.6px;top:142.04999999999998px;width:9.399999999999977px;height:1.1px;background:#444;"></div>
<svg class="i" style="left:565.80px;top:134.90px" width="7.6" height="5.4"><path d="M1.55 1.55 L3.80 3.85 L6.05 1.55" stroke="#3b3b3b" stroke-width="1.1" fill="none" stroke-linecap="round" stroke-linejoin="round"/></svg>
<span id="t108" class="t " style="left:582.60px;top:127.4px;font-size:6.2px;line-height:8px;color:#2b88d8;font-weight:700;transform:scaleX(0.7500);">1</span>
<div class="b" style="left:588.1px;top:130.75px;width:9.199999999999932px;height:1.1px;background:#444;"></div>
<span id="t109" class="t " style="left:586.00px;top:132.3px;font-size:6.6px;line-height:9px;color:#2b88d8;font-weight:700;transform:scaleX(0.8500);">a</span>
<div class="b" style="left:591.9px;top:136.35px;width:5.399999999999977px;height:1.1px;background:#444;"></div>
<span id="t110" class="t " style="left:590.60px;top:137.9px;font-size:6.6px;line-height:9px;color:#2b88d8;font-weight:700;transform:scaleX(0.7000);">i</span>
<div class="b" style="left:594.4px;top:142.04999999999998px;width:2.8999999999999773px;height:1.1px;background:#444;"></div>
<svg class="i" style="left:603.10px;top:134.90px" width="7.6" height="5.4"><path d="M1.55 1.55 L3.80 3.85 L6.05 1.55" stroke="#3b3b3b" stroke-width="1.1" fill="none" stroke-linecap="round" stroke-linejoin="round"/></svg>
<div class="b" style="left:627px;top:130.75px;width:13.100000000000023px;height:1.1px;background:#444;"></div>
<div class="b" style="left:627px;top:142.04999999999998px;width:13.100000000000023px;height:1.1px;background:#444;"></div>
<div class="b" style="left:635.1px;top:134.54999999999998px;width:5.0px;height:1.1px;background:#444;"></div>
<div class="b" style="left:635.1px;top:138.35px;width:5.0px;height:1.1px;background:#444;"></div>
<svg class="i" style="left:626px;top:133.5px;" width="9" height="7" viewBox="0 0 9 7"><path d="M7.4 3.5 H1.4 M3.6 1.2 L1.2 3.5 L3.6 5.8" fill="none" stroke="#2b88d8" stroke-width="1.2" stroke-linecap="round" stroke-linejoin="round"/></svg>
<div class="b" style="left:652px;top:130.75px;width:13.200000000000045px;height:1.1px;background:#444;"></div>
<div class="b" style="left:652px;top:142.04999999999998px;width:13.200000000000045px;height:1.1px;background:#444;"></div>
<div class="b" style="left:660.2px;top:134.54999999999998px;width:5.0px;height:1.1px;background:#444;"></div>
<div class="b" style="left:660.2px;top:138.35px;width:5.0px;height:1.1px;background:#444;"></div>
<svg class="i" style="left:651px;top:133.5px;" width="9" height="7" viewBox="0 0 9 7"><path d="M1.2 3.5 H7.2 M5 1.2 L7.4 3.5 L5 5.8" fill="none" stroke="#2b88d8" stroke-width="1.2" stroke-linecap="round" stroke-linejoin="round"/></svg>
<svg class="i" style="left:677.5px;top:130px;" width="18" height="15" viewBox="0 0 18 15"><path d="M1.6 13.7 L8.9 5.6 L16.2 13.7 M4.6 10.6 H13.2" fill="none" stroke="#3b3b3b" stroke-width="1.25" stroke-linejoin="round" stroke-linecap="round"/><path d="M5.8 3 H1.8 M3.4 1.4 L1.6 3 L3.4 4.6 M12 3 H16 M14.4 1.4 L16.2 3 L14.4 4.6" fill="none" stroke="#2b88d8" stroke-width="1.2" stroke-linecap="round" stroke-linejoin="round"/></svg>
<svg class="i" style="left:698.80px;top:134.90px" width="7.6" height="5.4"><path d="M1.55 1.55 L3.80 3.85 L6.05 1.55" stroke="#3b3b3b" stroke-width="1.1" fill="none" stroke-linecap="round" stroke-linejoin="round"/></svg>
<span id="t111" class="t " style="left:722.10px;top:127.1px;font-size:9.0px;line-height:12px;color:#2b88d8;font-weight:700;transform:scaleX(0.9857);">A</span>
<span id="t112" class="t " style="left:722.30px;top:135.5px;font-size:9.6px;line-height:12px;color:#3b3b3b;font-weight:400;transform:scaleX(1.0000);">Z</span>
<svg class="i" style="left:729.5px;top:129px;" width="10" height="17" viewBox="0 0 10 17"><path d="M4.9 1 V15.4 M1.4 12 L4.9 15.6 L8.4 12" fill="none" stroke="#3b3b3b" stroke-width="1.15" stroke-linecap="round" stroke-linejoin="round"/></svg>
<svg class="i" style="left:752px;top:130.5px;" width="12" height="13" viewBox="0 0 12 13"><path d="M5.6 0.9 H10.8 M6.2 0.9 V12.2 M9 0.9 V12.2" fill="none" stroke="#3b3b3b" stroke-width="1.3"/><path d="M6.2 0.9 H5 A3.3 3.3 0 0 0 5 7.5 H6.2 Z" fill="#3b3b3b"/></svg>
<div class="b" style="left:501px;top:156.4px;width:22.6px;height:22.8px;background:#e6e6e6;border:1.2px solid #7a7a7a;border-radius:4px;"></div>
<div class="b" style="left:505.4px;top:160.85px;width:13.5px;height:1.1px;background:#444;"></div>
<div class="b" style="left:530.1px;top:160.85px;width:13.799999999999955px;height:1.1px;background:#444;"></div>
<div class="b" style="left:555.2px;top:160.85px;width:13.799999999999955px;height:1.1px;background:#444;"></div>
<div class="b" style="left:580px;top:160.85px;width:13.799999999999955px;height:1.1px;background:#444;"></div>
<div class="b" style="left:638.3px;top:160.85px;width:8.700000000000045px;height:1.1px;background:#444;"></div>
<div class="b" style="left:505.4px;top:164.85px;width:9.399999999999977px;height:1.1px;background:#444;"></div>
<div class="b" style="left:532.4px;top:164.85px;width:9.200000000000045px;height:1.1px;background:#444;"></div>
<div class="b" style="left:559.3px;top:164.85px;width:9.700000000000045px;height:1.1px;background:#444;"></div>
<div class="b" style="left:580px;top:164.85px;width:13.799999999999955px;height:1.1px;background:#444;"></div>
<div class="b" style="left:638.3px;top:164.85px;width:8.700000000000045px;height:1.1px;background:#444;"></div>
<div class="b" style="left:505.4px;top:168.95px;width:13.5px;height:1.1px;background:#444;"></div>
<div class="b" style="left:530.1px;top:168.95px;width:13.799999999999955px;height:1.1px;background:#444;"></div>
<div class="b" style="left:555.2px;top:168.95px;width:13.799999999999955px;height:1.1px;background:#444;"></div>
<div class="b" style="left:580px;top:168.95px;width:13.799999999999955px;height:1.1px;background:#444;"></div>
<div class="b" style="left:638.3px;top:168.95px;width:8.700000000000045px;height:1.1px;background:#444;"></div>
<div class="b" style="left:505.4px;top:172.95px;width:9.399999999999977px;height:1.1px;background:#444;"></div>
<div class="b" style="left:532.4px;top:172.95px;width:9.200000000000045px;height:1.1px;background:#444;"></div>
<div class="b" style="left:559.3px;top:172.95px;width:9.700000000000045px;height:1.1px;background:#444;"></div>
<div class="b" style="left:580px;top:172.95px;width:13.799999999999955px;height:1.1px;background:#444;"></div>
<div class="b" style="left:638.3px;top:172.95px;width:8.700000000000045px;height:1.1px;background:#444;"></div>
<div class="b" style="left:603.8px;top:160.1px;width:1.2px;height:15.3px;background:#2b88d8;"></div>
<div class="b" style="left:618.9px;top:160.1px;width:1.2px;height:15.3px;background:#2b88d8;"></div>
<div class="b" style="left:606.3px;top:165.9px;width:11.300000000000068px;height:1.2px;background:#444;"></div>
<div class="b" style="left:606.3px;top:169.9px;width:11.300000000000068px;height:1.2px;background:#444;"></div>
<div class="b" style="left:606.3px;top:173.8px;width:11.300000000000068px;height:1.2px;background:#444;"></div>
<svg class="i" style="left:605px;top:160px;" width="14" height="6" viewBox="0 0 14 6"><path d="M1.6 2.9 H12.4 M3.4 1 L1.4 2.9 L3.4 4.8 M10.6 1 L12.6 2.9 L10.6 4.8" fill="none" stroke="#2b88d8" stroke-width="1.15" stroke-linecap="round" stroke-linejoin="round"/></svg>
<svg class="i" style="left:630.5px;top:160.5px;" width="7" height="15" viewBox="0 0 7 15"><path d="M3.4 1.2 V6 M1.2 3.4 L3.4 1.2 L5.6 3.4 M3.4 8.6 V13.6 M1.2 11.4 L3.4 13.6 L5.6 11.4" fill="none" stroke="#2b88d8" stroke-width="1.15" stroke-linecap="round" stroke-linejoin="round"/></svg>
<svg class="i" style="left:651.70px;top:165.50px" width="7.6" height="5.4"><path d="M1.55 1.55 L3.80 3.85 L6.05 1.55" stroke="#3b3b3b" stroke-width="1.1" fill="none" stroke-linecap="round" stroke-linejoin="round"/></svg>
<svg class="i" style="left:674px;top:159px;" width="18" height="18" viewBox="0 0 18 18"><path d="M3.4 7 L8.4 1.6 L14 7.4 L8.4 12 Z" fill="#fff" stroke="#3b3b3b" stroke-width="1.15" stroke-linejoin="round"/><path d="M8.4 1.6 C8.6 0.4 10.2 0.6 10 2 L10 4" fill="none" stroke="#555" stroke-width="1"/><path d="M12.6 5.4 C14 6.4 14.9 8 14.8 10.4 C13.6 9.6 13 8.4 12.6 7 Z" fill="#1e6fc4"/><rect x="1.4" y="13.3" width="14.6" height="3.3" fill="#fff" stroke="#c4c4c4" stroke-width="0.9"/></svg>
<svg class="i" style="left:696.80px;top:165.70px" width="7.6" height="5.4"><path d="M1.55 1.55 L3.80 3.85 L6.05 1.55" stroke="#3b3b3b" stroke-width="1.1" fill="none" stroke-linecap="round" stroke-linejoin="round"/></svg>
<svg class="i" style="left:713px;top:159px;" width="17" height="17" viewBox="0 0 17 17"><path d="M1.4 1.6 H15.6 M1.4 1.6 V15 M15.6 1.6 V15 M8.5 1.6 V15 M1.4 8.3 H15.6" fill="none" stroke="#3b3b3b" stroke-width="1" stroke-dasharray="1 1"/><path d="M1 15.3 H16" stroke="#3b3b3b" stroke-width="1.4"/></svg>
<svg class="i" style="left:736.70px;top:165.70px" width="7.6" height="5.4"><path d="M1.55 1.55 L3.80 3.85 L6.05 1.55" stroke="#3b3b3b" stroke-width="1.1" fill="none" stroke-linecap="round" stroke-linejoin="round"/></svg>
<svg class="i" style="left:1101.5px;top:132.5px;" width="9" height="6" viewBox="0 0 9 6"><path d="M1.4 4.2 L4.2 1.4 L7 4.2" fill="none" stroke="#c8c8c8" stroke-width="1" stroke-linecap="round" stroke-linejoin="round"/></svg>
<svg class="i" style="left:1101.90px;top:152.30px" width="7.6" height="5.4"><path d="M1.55 1.55 L3.80 3.85 L6.05 1.55" stroke="#3b3b3b" stroke-width="1.1" fill="none" stroke-linecap="round" stroke-linejoin="round"/></svg>
<svg class="i" style="left:1101.5px;top:167.5px;" width="9" height="9" viewBox="0 0 9 9"><path d="M1.2 1.6 H7.4" stroke="#3b3b3b" stroke-width="1"/><path d="M1.6 4.4 L4.3 7 L7 4.4" fill="none" stroke="#3b3b3b" stroke-width="1.1" stroke-linecap="round" stroke-linejoin="round"/></svg>
<svg class="i" style="left:1134px;top:121px;" width="18" height="17" viewBox="0 0 18 17"><circle cx="11" cy="6.3" r="4.9" fill="none" stroke="#2b88d8" stroke-width="1.15"/><path d="M7.4 9.8 L1.3 15.6" stroke="#2b88d8" stroke-width="1.2" stroke-linecap="round"/><path d="M11 5.6 V8.6" stroke="#555" stroke-width="1"/><circle cx="11" cy="4" r="0.6" fill="#555"/></svg>
<svg class="i" style="left:1187.20px;top:127.60px" width="7.6" height="5.4"><path d="M1.55 1.55 L3.80 3.85 L6.05 1.55" stroke="#3b3b3b" stroke-width="1.1" fill="none" stroke-linecap="round" stroke-linejoin="round"/></svg>
<svg class="i" style="left:1134px;top:146px;" width="16" height="17" viewBox="0 0 16 17"><path d="M6.4 6 C2.2 5.8 0.6 10.6 4.6 12.8 H7.6 M5.6 10.6 L7.8 12.8 L5.6 15" fill="none" stroke="#2b88d8" stroke-width="1.2" stroke-linecap="round" stroke-linejoin="round"/><text x="9" y="7.6" text-anchor="middle" font-family="Liberation Sans, sans-serif" font-size="9.4" fill="#c050c0">b</text><text x="12.4" y="16" text-anchor="middle" font-family="Liberation Sans, sans-serif" font-size="9.8" fill="#2b88d8">c</text></svg>
<svg class="i" style="left:1136px;top:171.5px;" width="12" height="17" viewBox="0 0 12 17"><path d="M1.4 1.2 V13.2 L4.6 10.4 L6.8 15.4 L8.8 14.4 L6.6 9.6 L10.6 9.4 Z" fill="#fff" stroke="#2a2a2a" stroke-width="1.1" stroke-linejoin="round"/></svg>
<svg class="i" style="left:1187.80px;top:176.90px" width="7.6" height="5.4"><path d="M1.55 1.55 L3.80 3.85 L6.05 1.55" stroke="#3b3b3b" stroke-width="1.1" fill="none" stroke-linecap="round" stroke-linejoin="round"/></svg>
<svg class="i" style="left:1228px;top:120px;" width="23" height="32" viewBox="0 0 23 32"><rect x="6.3" y="2.6" width="10.4" height="20.2" rx="5.2" fill="#83beec" stroke="#1e6fc4" stroke-width="1.3"/><path d="M2.7 17 C2.7 28.6 20.3 28.6 20.3 17 M11.5 25.8 V30.4" fill="none" stroke="#3b3b3b" stroke-width="1.2" stroke-linecap="round"/></svg>
<svg class="i" style="left:1290px;top:119px;" width="30" height="32" viewBox="0 0 30 32"><path d="M12.8 4.1 H2.1 V30.6 H21.8 V18.3" fill="#f1f1f1" stroke="#bdbdbd" stroke-width="1"/><path d="M12.8 4.1 L21.8 18.3 V30 H2.6 V4.6 Z" fill="#f1f1f1"/><g transform="translate(12.2 17.7) rotate(45)" fill="none" stroke="#bcbcbc" stroke-width="0.9"><rect x="-6.4" y="-2.6" width="12.8" height="5.2"/><rect x="-4.3" y="-0.9" width="8.6" height="1.8"/></g><g transform="translate(19.9 9.8) rotate(45)"><rect x="-7.2" y="-2.6" width="14.4" height="5.2" fill="#efefef" stroke="#c2c2c2" stroke-width="0.9"/><rect x="-7.2" y="0.5" width="11.4" height="2.3" fill="#b4b4b4"/></g><g transform="translate(24.3 5.5) rotate(45)"><rect x="-2.6" y="-2.9" width="5.2" height="4.6" fill="#efefef" stroke="#c2c2c2" stroke-width="0.9"/></g></svg>
<svg class="i" style="left:1297.90px;top:174.15px" width="7.8" height="5.3"><path d="M1.50 1.50 L3.90 3.80 L6.30 1.50" stroke="#c0c0c0" stroke-width="1" fill="none" stroke-linecap="round" stroke-linejoin="round"/></svg>
<svg class="i" style="left:1350px;top:120px;" width="33" height="33" viewBox="0 0 33 33"><path d="M19.2 3.4 L24.2 6.4 L8.6 27.2 L2.2 30.6 L3 23.6 Z" fill="#fff" stroke="#185abd" stroke-width="1.3" stroke-linejoin="round"/><path d="M19.2 3.4 L20.6 1.8 C21.2 1.2 22 1.2 22.6 1.6 L25.4 3.4 C26 3.8 26 4.6 25.6 5.2 L24.2 6.4 Z" fill="#185abd" stroke="#185abd" stroke-width="1.2" stroke-linejoin="round"/><path d="M2.2 30.6 L3 27 L5.4 28.8 Z" fill="#185abd"/><path d="M21.2 12.2 H28.6 M15.8 18.8 H23.6 M11.4 25.4 H19" stroke="#185abd" stroke-width="4.2" stroke-linecap="round"/></svg>
<svg class="i" style="left:1408px;top:193px;" width="13" height="8" viewBox="0 0 13 8"><path d="M1.4 1.6 L6.4 6.2 L11.4 1.6" fill="none" stroke="#3b3b3b" stroke-width="1.15" stroke-linecap="round" stroke-linejoin="round"/></svg>
<svg class="i" style="left:130.5px;top:895.5px;" width="14" height="13" viewBox="0 0 14 13"><path d="M6.6 2 V9.8 M6.6 2 C5 0.9 2.8 0.9 1 1.4 V10 H6.6 M6.6 2 C8.2 0.9 10.4 0.9 12.4 1.4 V7.2" fill="none" stroke="#3b3b3b" stroke-width="1.1" stroke-linejoin="round"/><path d="M7.6 9.6 L9.4 11.6 L13 7.8" fill="none" stroke="#3b3b3b" stroke-width="1.1" stroke-linecap="round" stroke-linejoin="round"/></svg>
<svg class="i" style="left:381.5px;top:894.5px;" width="15" height="14" viewBox="0 0 15 14"><circle cx="6.6" cy="2.3" r="1.5" fill="none" stroke="#3b3b3b" stroke-width="1"/><path d="M1.2 4.4 C3.2 5.2 4.6 5.4 6.6 5.4 C8.6 5.4 10 5.2 12 4.4 M4.8 5.4 V8.2 L3 12.8 M8.4 5.4 V8 L9 9" fill="none" stroke="#3b3b3b" stroke-width="1" stroke-linecap="round" stroke-linejoin="round"/><path d="M8.6 9.4 L13.4 13.2 M13.4 9.4 L8.6 13.2" stroke="#3b3b3b" stroke-width="1.1" stroke-linecap="round"/></svg>
<svg class="i" style="left:1098.5px;top:894.5px;" width="15" height="14" viewBox="0 0 15 14"><path d="M0.6 3.4 V0.6 H3.4 M10.8 0.6 H13.6 V3.4 M13.6 10.6 V13.4 H10.8 M3.4 13.4 H0.6 V10.6" fill="none" stroke="#3b3b3b" stroke-width="1.05"/><path d="M3.8 2.2 H8.4 L10.8 4.6 V11.4 H3.8 Z M8.2 2.2 V4.8 H10.8" fill="none" stroke="#3b3b3b" stroke-width="1.05" stroke-linejoin="round"/></svg>
<svg class="i" style="left:1163px;top:894.5px;" width="14" height="13" viewBox="0 0 14 13"><path d="M6.7 2 V11.6 M6.7 2 C5 0.8 3 0.8 0.8 1.3 V11 C3 10.5 5 10.6 6.7 11.6 C8.4 10.6 10.4 10.5 12.6 11 V1.3 C10.4 0.8 8.4 0.8 6.7 2" fill="none" stroke="#3b3b3b" stroke-width="1.05" stroke-linejoin="round"/><path d="M2.4 3.6 H5 M2.4 5.6 H5 M2.4 7.6 H5 M8.4 3.6 H11 M8.4 5.6 H11 M8.4 7.6 H11" stroke="#777" stroke-width="0.9"/></svg>
<svg class="i" style="left:1202.3px;top:894.5px;" width="12" height="14" viewBox="0 0 12 14"><rect x="0.9" y="0.9" width="10.2" height="12.2" fill="#fff" stroke="#3b3b3b" stroke-width="1.1"/><path d="M2.8 3.2 H9.2 M2.8 5 H9.2 M2.8 6.8 H9.2 M2.8 8.6 H9.2 M2.8 10.4 H9.2" stroke="#555" stroke-width="1"/></svg>
<svg class="i" style="left:1239.5px;top:894.5px;" width="15" height="14" viewBox="0 0 15 14"><path d="M6 12 H1 V0.9 H11.6 V5.4" fill="none" stroke="#3b3b3b" stroke-width="1.1"/><path d="M2.6 3 H10 M2.6 5 H8 M2.6 7 H5.4" stroke="#777" stroke-width="0.9"/><circle cx="10" cy="9.2" r="4" fill="#3b3b3b"/><path d="M6.2 9.2 H13.8 M10 5.4 C8.2 7.2 8.2 11.2 10 13 M10 5.4 C11.8 7.2 11.8 11.2 10 13" fill="none" stroke="#ddd" stroke-width="0.7"/></svg>
<div class="b" style="left:1271.5px;top:901.4px;width:7px;height:1px;background:#777;"></div>
<div class="b" style="left:1284.6px;top:901.4px;width:94.8px;height:1px;background:#777;"></div>
<div class="b" style="left:1331.3px;top:898.8px;width:1px;height:6.2px;background:#777;"></div>
<div class="b" style="left:1338.8px;top:896.3px;width:4.8px;height:10.8px;background:#555;"></div>
<div class="b" style="left:1384.8px;top:901.4px;width:7px;height:1px;background:#777;"></div>
<div class="b" style="left:1387.8px;top:898.4px;width:1px;height:7px;background:#777;"></div>
<svg class="i" style="left:16px;top:921px;" width="24" height="20" viewBox="0 0 24 20"><defs><linearGradient id="cl" x1="0" y1="0" x2="0" y2="1"><stop offset="0" stop-color="#bdd0ec"/><stop offset="0.6" stop-color="#dfe9f6"/><stop offset="1" stop-color="#fafcfe"/></linearGradient></defs><path d="M9.6 1.2 C13.2 3.2 14.4 7.6 12 11 C9.6 13.4 4.4 12.8 1.4 9 C5.6 10 9.8 6.6 9.6 1.2 Z" fill="#f9b616"/><path d="M7 18.6 C3.4 18.6 2.8 14.4 6 13.6 C6 9 12.6 6.6 15.2 11.2 C18.6 10 21.4 12.2 21 14.8 C22.8 15.6 22.4 18.6 20 18.6 Z" fill="url(#cl)"/></svg>
<svg class="i" style="left:495px;top:923.5px;" width="23" height="23" viewBox="0 0 23 23"><defs><linearGradient id="wn" x1="0" y1="0" x2="1" y2="1"><stop offset="0" stop-color="#52c6f7"/><stop offset="1" stop-color="#0a74d2"/></linearGradient></defs><path d="M0.4 1.4 A1 1 0 0 1 1.4 0.4 H10.8 V10.8 H0.4 Z M11.9 0.4 H21.3 A1 1 0 0 1 22.3 1.4 V10.8 H11.9 Z M0.4 11.9 H10.8 V22.3 H1.4 A1 1 0 0 1 0.4 21.3 Z M11.9 11.9 H22.3 V21.3 A1 1 0 0 1 21.3 22.3 H11.9 Z" fill="url(#wn)"/></svg>
<svg class="i" style="left:537px;top:923px;" width="24" height="24" viewBox="0 0 24 24"><circle cx="11.2" cy="10" r="8.1" fill="#e3eff5" stroke="#1f1f1f" stroke-width="2.1"/><path d="M17 16.2 L21.4 20.8" stroke="#1f1f1f" stroke-width="2.4" stroke-linecap="round"/></svg>
<svg class="i" style="left:579px;top:923px;" width="24" height="23" viewBox="0 0 24 23"><defs><linearGradient id="tv" x1="0" y1="0" x2="1" y2="1"><stop offset="0" stop-color="#3a3a3a"/><stop offset="1" stop-color="#151515"/></linearGradient></defs><rect x="0.9" y="7" width="16.9" height="14.5" rx="1.2" fill="url(#tv)"/><rect x="6.3" y="1" width="16.9" height="14.4" rx="1.2" fill="#fbfbfb" fill-opacity="0.82"/><rect x="6.3" y="7" width="11.5" height="8.4" fill="#cfcfcf" fill-opacity="0.75"/></svg>
<svg class="i" style="left:620.5px;top:923px;" width="25" height="24" viewBox="0 0 25 24"><defs><linearGradient id="ch" x1="0" y1="0" x2="1" y2="1"><stop offset="0" stop-color="#8a72d8"/><stop offset="0.5" stop-color="#6f74dd"/><stop offset="1" stop-color="#5558c8"/></linearGradient></defs><path d="M12.4 0.8 A11 11 0 1 1 6.6 21 L1 22.2 L2.8 17 A11 11 0 0 1 12.4 0.8 Z" fill="url(#ch)"/><rect x="6" y="7.6" width="9.8" height="8.2" rx="1.4" fill="#fff"/><path d="M16.4 10.4 L19.6 8.2 V15.2 L16.4 13 Z" fill="#fff"/></svg>
<svg class="i" style="left:663px;top:923.5px;" width="24" height="22" viewBox="0 0 24 22"><rect x="6.2" y="0.8" width="17" height="20.4" rx="1" fill="#0f64c0"/><rect x="12" y="3.6" width="5.6" height="5" fill="#28a8ea"/><rect x="17.6" y="3.6" width="5.6" height="5" fill="#50d9ff"/><rect x="12" y="8.6" width="5.6" height="5" fill="#0078d4"/><rect x="17.6" y="8.6" width="5.6" height="5" fill="#28a8ea"/><path d="M6.2 13.2 L23.2 21.2 H7.2 A1 1 0 0 1 6.2 20.2 Z" fill="#1490df"/><path d="M23.2 12.4 L9 21.2 H22.2 A1 1 0 0 0 23.2 20.2 Z" fill="#28a8ea"/><rect x="0.8" y="5.2" width="11.3" height="11.3" rx="1" fill="#0f6cd0"/><text x="6.45" y="14" text-anchor="middle" font-family="Liberation Sans, sans-serif" font-weight="700" font-size="8.6" fill="#fff">O</text></svg>
<svg class="i" style="left:705px;top:924px;" width="26" height="22" viewBox="0 0 26 22"><defs><linearGradient id="fo" x1="0" y1="0" x2="0" y2="1"><stop offset="0" stop-color="#ffd866"/><stop offset="1" stop-color="#f6b62a"/></linearGradient></defs><path d="M1 1.8 A1 1 0 0 1 2 0.8 H8.4 L10.6 3 H1 Z" fill="#e8a317"/><path d="M1 3 H23.4 A1 1 0 0 1 24.4 4 V19.8 A1 1 0 0 1 23.4 20.8 H2 A1 1 0 0 1 1 19.8 Z" fill="url(#fo)"/><path d="M5 20.8 V15.6 A1.6 1.6 0 0 1 6.6 14 H19 A1.6 1.6 0 0 1 20.6 15.6 V20.8 Z" fill="#1a7fd6"/><rect x="7.6" y="16.6" width="10.4" height="1.4" rx="0.7" fill="#0f5fb0"/></svg>
<svg class="i" style="left:748px;top:923px;" width="25" height="23" viewBox="0 0 25 23"><circle cx="12.6" cy="4.2" r="3.5" fill="#7b83eb"/><circle cx="19.8" cy="5.4" r="2.5" fill="#5059c9"/><path d="M16.6 9 H22.6 A1 1 0 0 1 23.6 10 V15.4 A3.8 3.8 0 0 1 16.6 17 Z" fill="#5059c9"/><path d="M7.4 9 H18 A1 1 0 0 1 19 10 V16.4 A5.8 5.8 0 0 1 7.4 16.4 Z" fill="#7b83eb"/><rect x="0.6" y="5.8" width="11.3" height="11.3" rx="1" fill="#4b53bc"/><text x="6.25" y="14.6" text-anchor="middle" font-family="Liberation Sans, sans-serif" font-weight="700" font-size="8.8" fill="#fff">T</text></svg>
<svg class="i" style="left:790.7px;top:922.8px;" width="24" height="24" viewBox="0 0 24 24"><defs><linearGradient id="e1" x1="0" y1="0" x2="1" y2="0"><stop offset="0" stop-color="#2b96f0"/><stop offset="0.28" stop-color="#35b0f2"/><stop offset="0.5" stop-color="#2cc3d5"/><stop offset="0.74" stop-color="#41d0a4"/><stop offset="0.86" stop-color="#5fdc5f"/><stop offset="1" stop-color="#5fdc5f"/></linearGradient></defs><circle cx="11.65" cy="11.65" r="11.6" fill="url(#e1)"/><path d="M13.8 14.2 L21.4 6.6 L23.3 11.6 L21 14.8 L17.6 15.8 Z" fill="#4cc870"/><path d="M18.2 4 L21.6 6.4 L23.3 11.6 L21 14.8 L18.6 9.4 Z" fill="#5fdc5f"/><path d="M0.15 10 C1.8 7.2 4.8 5.9 7.8 6 C10.6 6.1 13.2 7.4 14.1 9.8 C14.3 10.3 14.4 10.9 14.4 11.4 C14.4 12.4 13.6 13.2 13.6 14 C13.6 15 15.4 15.7 17.8 15.7 C19.4 15.7 21 15.2 23 14.4 A11.65 11.65 0 0 1 0.15 10 Z" fill="#0c7bd6"/><path d="M7.6 6.6 C6.4 9 6 11.6 6.4 14 C6.9 17.6 8.6 20.8 10.6 23.2 C12.8 23.5 15 22.9 16.8 21.8 C18.8 20.6 20.6 19 21.5 17.4 C19.6 18.6 17.6 19.2 15.6 19.2 C11.6 19.2 8.6 16.4 8.6 12.4 C8.6 10.2 9.6 8.4 11 7.4 C10 6.8 8.8 6.5 7.6 6.6 Z" fill="#0f55a5"/><path d="M8.6 12.4 C8.6 10.4 10 9.2 11.8 9.2 C13.4 9.2 14.4 10.2 14.4 11.4 C14.4 12.4 13.6 13.2 13.6 14 C13.6 15 15.4 15.7 17.8 15.7 C19.4 15.7 21 15.2 23 14.4 L24 14.6 L23.6 16.4 L21.5 17.4 C19.6 18.6 17.6 19.2 15.6 19.2 C11.6 19.2 8.6 16.4 8.6 12.4 Z" fill="#dfedf3"/></svg>
<svg class="i" style="left:832.4px;top:923.3px;" width="24" height="23" viewBox="0 0 24 23"><rect x="5.7" y="0.9" width="17.3" height="5.2" fill="#41a5ee"/><rect x="5.7" y="6" width="17.3" height="5.2" fill="#2b7cd3"/><rect x="5.7" y="11.1" width="17.3" height="5.2" fill="#185abd"/><rect x="5.7" y="16.2" width="17.3" height="5.2" fill="#103f91"/><rect x="0.4" y="5.3" width="11.9" height="11.5" rx="1" fill="#185abd"/><text x="6.35" y="14.4" text-anchor="middle" font-family="Liberation Sans, sans-serif" font-weight="700" font-size="9" fill="#fff">W</text></svg>
<svg class="i" style="left:873px;top:921px;" width="28" height="27" viewBox="0 0 28 27"><defs><linearGradient id="va" x1="0" y1="0" x2="0.6" y2="1"><stop offset="0" stop-color="#36d0cc"/><stop offset="1" stop-color="#1a8ee6"/></linearGradient></defs><circle cx="10.7" cy="9.8" r="5.4" fill="url(#va)"/><path d="M1.9 18.6 A2.2 2.2 0 0 1 4.1 16.4 H17 A2.2 2.2 0 0 1 19.2 18.6 C19.2 22.6 15.4 25 10.6 25 C5.6 25 1.9 22.6 1.9 18.6 Z" fill="url(#va)"/><path d="M18.3 5.2 V8.6 M21.4 2.3 V11.5 M24.3 4.2 V10" stroke="#1e86d8" stroke-width="1.35" stroke-linecap="round"/></svg>
<svg class="i" style="left:916.5px;top:922.5px;" width="25" height="24" viewBox="0 0 25 24"><rect x="0.6" y="0.8" width="17" height="16.5" rx="1.6" fill="#e9eaeb"/><rect x="2.8" y="2.8" width="2.5" height="2.5" rx="0.5" fill="#e04a1c"/><rect x="6.7" y="2.8" width="2.5" height="2.5" rx="0.5" fill="#e04a1c"/><rect x="10.6" y="2.8" width="2.5" height="2.5" rx="0.5" fill="#e04a1c"/><rect x="2.8" y="6.7" width="2.5" height="2.5" rx="0.5" fill="#e04a1c"/><rect x="2.8" y="10.6" width="2.5" height="2.5" rx="0.5" fill="#e04a1c"/><path d="M13.4 5.6 C14.4 9 14.2 13.6 13.6 18 M5.6 14.2 C9.6 15 14.4 14.6 18.4 13.6" fill="none" stroke="#8c969c" stroke-width="1.9" stroke-linecap="round"/><circle cx="20.8" cy="13" r="1.8" fill="none" stroke="#1e86e8" stroke-width="1.3"/><circle cx="13.3" cy="20.6" r="1.8" fill="none" stroke="#1e86e8" stroke-width="1.3"/></svg>
<svg class="i" style="left:1163px;top:930px;" width="15" height="9" viewBox="0 0 15 9"><path d="M1.3 7.6 L7.4 1.4 L13.5 7.6" fill="none" stroke="#222" stroke-width="1.25" stroke-linecap="round" stroke-linejoin="round"/></svg>
<svg class="i" style="left:1194.5px;top:926.5px;" width="13" height="16" viewBox="0 0 13 16"><rect x="3.9" y="0.9" width="5.2" height="9.2" rx="2.6" fill="none" stroke="#1f5fbf" stroke-width="1.1"/><path d="M1.3 7.6 A5.2 5.2 0 0 0 11.7 7.6 M6.5 12.8 V15.2" fill="none" stroke="#1f5fbf" stroke-width="1.1" stroke-linecap="round"/></svg>
<svg class="i" style="left:1265.5px;top:927.5px;" width="16" height="13" viewBox="0 0 16 13"><path d="M1 5.4 A9.6 9.6 0 0 1 15 5.4" fill="none" stroke="#9fb0b8" stroke-width="1.1" stroke-linecap="round"/><path d="M3.2 7.6 A6.6 6.6 0 0 1 12.8 7.6 M5.4 9.6 A3.6 3.6 0 0 1 10.6 9.6" fill="none" stroke="#222" stroke-width="1.15" stroke-linecap="round"/><circle cx="8" cy="11.3" r="1" fill="#222"/></svg>
<svg class="i" style="left:1288px;top:927.5px;" width="18" height="14" viewBox="0 0 18 14"><path d="M1 5 H3.8 L7.6 1.4 V12.4 L3.8 9 H1 Z" fill="none" stroke="#222" stroke-width="1.05" stroke-linejoin="round"/><path d="M9.8 4.6 A3.4 3.4 0 0 1 9.8 9.4 M11.8 2.8 A6 6 0 0 1 11.8 11.2 M13.8 1 A8.6 8.6 0 0 1 13.8 13" fill="none" stroke="#222" stroke-width="1.05" stroke-linecap="round"/></svg>
<svg class="i" style="left:1311.5px;top:929px;" width="17" height="11" viewBox="0 0 17 11"><rect x="0.8" y="1" width="12.8" height="8.6" rx="1.8" fill="none" stroke="#222" stroke-width="1.1"/><rect x="2.6" y="2.8" width="2.4" height="5" rx="0.6" fill="#222"/><path d="M14.6 3.6 V7 A1.6 1.6 0 0 0 14.6 3.6 Z" fill="#222" stroke="#222" stroke-width="0.8"/></svg>
<svg class="i" style="left:1402px;top:927px;" width="15" height="16" viewBox="0 0 15 16"><path d="M6.4 1.2 C3.4 1.2 2.4 3.8 2.4 6.2 V9 L0.8 11.6 H12 L10.4 9 V6.2 C10.4 3.8 9.4 1.2 6.4 1.2 Z" fill="#151515"/><path d="M4.8 12.8 A1.7 1.7 0 0 0 8 12.8 Z" fill="#151515"/><path d="M4.6 5 H7.4 L4.6 8.4 H7.4" fill="none" stroke="#d0e4ed" stroke-width="0.9"/><path d="M10.4 0.9 H13.4 L10.4 4.4 H13.4" fill="none" stroke="#151515" stroke-width="1"/></svg>
</div>
</body></html>
